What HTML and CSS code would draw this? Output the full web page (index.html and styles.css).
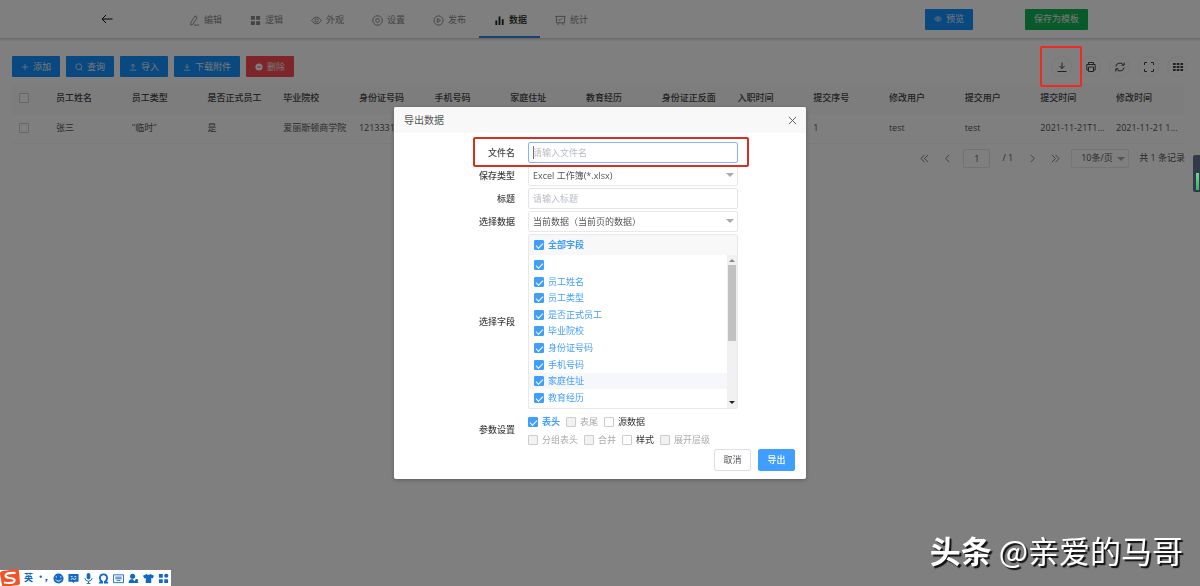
FILE: index.html
```html
<!DOCTYPE html>
<html lang="zh-CN">
<head>
    <meta charset="UTF-8">
    <meta name="viewport" content="width=device-width, initial-scale=1.0">
    <title>数据管理</title>
    <link rel="stylesheet" href="styles.css">
</head>
<body>
    <header class="topbar">
        <button class="back" aria-label="返回">
            <svg width="12" height="10" viewBox="0 0 12 10"><path d="M11.500 5H1M5 1 1 5l4 4"/></svg>
        </button>
        <nav class="tabs">
            <a href="#" class="tab"><svg class="icon" viewBox="0 0 12 12"><path d="M2 8.500 6.500 1l2.500 1.500L4.500 10 2 11zM5.500 11H11"/></svg>编辑</a>
            <a href="#" class="tab"><svg class="icon fill" viewBox="0 0 12 12"><path d="M1 1h4.300v4.300H1zM6.700 1H11v4.300H6.700zM1 6.700h4.300V11H1zM6.700 6.700H11V11H6.700z"/></svg>逻辑</a>
            <a href="#" class="tab"><svg class="icon" viewBox="0 0 12 12"><path d="M.5 6Q6-1.500 11.500 6 6 13.500.5 6z"/><circle cx="6" cy="6" r="1.800"/></svg>外观</a>
            <a href="#" class="tab"><svg class="icon" viewBox="0 0 12 12"><path d="M4 1h4l3 3v4l-3 3H4L1 8V4z"/><circle cx="6" cy="6" r="2"/></svg>设置</a>
            <a href="#" class="tab"><svg class="icon" viewBox="0 0 12 12"><circle cx="6" cy="6" r="5"/><path d="M4.700 3.800v4.400L8.200 6z"/></svg>发布</a>
            <a href="#" class="tab active"><svg class="icon fill" viewBox="0 0 12 12"><path d="M1.500 6h2v5h-2zM5 1.500h2V11H5zM8.500 4.500h2V11h-2z"/></svg>数据</a>
            <a href="#" class="tab"><svg class="icon" viewBox="0 0 12 12"><path d="M.5 1.500h11M1.500 1.500V8.500h9v-7M3.500 5l2 1 2.500-2.500M4 8.500 3 11M8 8.500 9 11"/></svg>统计</a>
        </nav>
        <div class="top-actions">
            <button class="btn"><svg class="glyph" viewBox="0 0 10 10"><path d="M.5 5Q5-.500 9.500 5 5 10.500.5 5z"/><circle cx="5" cy="5" r="1.500"/></svg>预览</button>
            <button class="btn green">保存为模板</button>
        </div>
    </header>

    <main class="page">
        <div class="toolbar">
            <button class="btn"><svg class="glyph" viewBox="0 0 10 10"><path d="M5 1v8M1 5h8"/></svg>添加</button>
            <button class="btn"><svg class="glyph" viewBox="0 0 10 10"><circle cx="4.700" cy="4.700" r="3.700"/><path d="m7.500 7.500 1.500 2"/></svg>查询</button>
            <button class="btn"><svg class="glyph" viewBox="0 0 10 10"><path d="M1 9h8M5 7V1.500M2.500 4 5 1.500 7.500 4"/></svg>导入</button>
            <button class="btn"><svg class="glyph" viewBox="0 0 10 10"><path d="M1 9h8M5 1v5.500M2.500 4 5 6.500 7.500 4"/></svg>下载附件</button>
            <button class="btn red"><svg class="glyph solid" viewBox="0 0 10 10"><path d="M5 .5a4.500 4.500 0 1 0 0 9 4.500 4.500 0 0 0 0-9zM2.800 4.300h4.400v1.400H2.800z"/></svg>删除</button>
            <div class="tools">
                <button class="tool" aria-label="导出"><svg viewBox="0 0 12 12"><path d="M1.500 10.500h9M6 1.500v6M3.500 5 6 7.500 8.500 5"/></svg></button>
                <button class="tool" aria-label="打印"><svg viewBox="0 0 12 12"><path d="M3.500 3V1.500h5V3M3.500 9H1.800V3.500h8.400V9H8.500M3.500 6h5v4.500h-5z"/></svg></button>
                <button class="tool" aria-label="刷新"><svg viewBox="0 0 12 12"><path d="M1.800 5.500Q2.500 2 6 2q2.500 0 3.500 2M10.200 1.500V4.200H7.500M10.200 6.500Q9.500 10 6 10 3.500 10 2.500 8M1.800 10.500V7.800h2.700"/></svg></button>
                <button class="tool" aria-label="全屏"><svg viewBox="0 0 12 12"><path d="M1.500 4V1.500H4M8 1.500h2.500V4M10.500 8v2.500H8M4 10.500H1.500V8"/></svg></button>
                <button class="tool" aria-label="列设置"><svg class="fill" viewBox="0 0 12 12"><path d="M1 2h2.700v2H1zM4.700 2h2.700v2H4.700zM8.400 2h2.700v2H8.400zM1 5h2.700v2H1zM4.700 5h2.700v2H4.700zM8.400 5h2.700v2H8.400zM1 8h2.700v2H1zM4.700 8h2.700v2H4.700zM8.400 8h2.700v2H8.400z"/></svg></button>
            </div>
        </div>

        <table class="grid">
            <thead>
                <tr>
                    <th class="pick"><input type="checkbox" class="check" aria-label="全选"></th>
                    <th>员工姓名</th><th>员工类型</th><th>是否正式员工</th><th>毕业院校</th><th>身份证号码</th>
                    <th>手机号码</th><th>家庭住址</th><th>教育经历</th><th>身份证正反面</th><th>入职时间</th>
                    <th>提交序号</th><th>修改用户</th><th>提交用户</th><th>提交时间</th><th>修改时间</th>
                </tr>
            </thead>
            <tbody>
                <tr>
                    <td class="pick"><input type="checkbox" class="check" aria-label="选择张三"></td>
                    <td>张三</td><td>"临时"</td><td>是</td><td>爱丽斯顿商学院</td><td>12133313</td>
                    <td></td><td></td><td></td><td></td><td></td>
                    <td>1</td><td>test</td><td>test</td><td>2021-11-21T1...</td><td>2021-11-21 1...</td>
                </tr>
            </tbody>
        </table>

        <div class="pager">
            <button class="arrow" aria-label="首页"><svg viewBox="0 0 10 10"><path d="M5 1 1 5l4 4M9 1 5 5l4 4"/></svg></button>
            <button class="arrow" aria-label="上一页"><svg viewBox="0 0 10 10"><path d="M7 1 3 5l4 4"/></svg></button>
            <input class="page-no" type="text" value="1" aria-label="页码">
            <span class="total-pages">/ 1</span>
            <button class="arrow" aria-label="下一页"><svg viewBox="0 0 10 10"><path d="m3 1 4 4-4 4"/></svg></button>
            <button class="arrow" aria-label="末页"><svg viewBox="0 0 10 10"><path d="m1 1 4 4-4 4M5 1l4 4-4 4"/></svg></button>
            <div class="select size">
                <select aria-label="每页条数"><option>10条/页</option></select>
            </div>
            <span>共 1 条记录</span>
        </div>
    </main>

    <div class="mask">
        <form class="dialog" role="dialog" aria-labelledby="dialogTitle">
            <div class="dialog-head">
                <h2 id="dialogTitle">导出数据</h2>
                <button type="button" class="close" aria-label="关闭"><svg viewBox="0 0 10 10"><path d="m1 1 8 8M9 1 1 9"/></svg></button>
            </div>
            <div class="dialog-body">
                <div class="row marked">
                    <label for="fileName">文件名</label>
                    <div class="control caret"><input class="text focus" id="fileName" type="text" placeholder="请输入文件名"></div>
                </div>
                <div class="row">
                    <label for="saveType">保存类型</label>
                    <div class="control select"><select id="saveType"><option>Excel 工作簿(*.xlsx)</option></select></div>
                </div>
                <div class="row">
                    <label for="sheetTitle">标题</label>
                    <div class="control"><input class="text" id="sheetTitle" type="text" placeholder="请输入标题"></div>
                </div>
                <div class="row">
                    <label for="range">选择数据</label>
                    <div class="control select"><select id="range"><option>当前数据（当前页的数据）</option></select></div>
                </div>
                <div class="row">
                    <span class="label">选择字段</span>
                    <div class="control fields">
                        <label class="option all"><input type="checkbox" class="check" checked>全部字段</label>
                        <div class="scroller">
                            <div class="list">
                                <label class="option"><input type="checkbox" class="check" aria-label="序号" checked></label>
                                <label class="option"><input type="checkbox" class="check" checked>员工姓名</label>
                                <label class="option"><input type="checkbox" class="check" checked>员工类型</label>
                                <label class="option"><input type="checkbox" class="check" checked>是否正式员工</label>
                                <label class="option"><input type="checkbox" class="check" checked>毕业院校</label>
                                <label class="option"><input type="checkbox" class="check" checked>身份证号码</label>
                                <label class="option"><input type="checkbox" class="check" checked>手机号码</label>
                                <label class="option hover"><input type="checkbox" class="check" checked>家庭住址</label>
                                <label class="option"><input type="checkbox" class="check" checked>教育经历</label>
                            </div>
                            <div class="bar">
                                <i class="up"></i>
                                <i class="thumb"></i>
                                <i class="down"></i>
                            </div>
                        </div>
                    </div>
                </div>
                <div class="row">
                    <span class="label">参数设置</span>
                    <div class="params">
                        <div class="param-line">
                            <label class="param on"><input type="checkbox" class="check" checked>表头</label>
                            <label class="param off"><input type="checkbox" class="check" disabled>表尾</label>
                            <label class="param"><input type="checkbox" class="check">源数据</label>
                        </div>
                        <div class="param-line">
                            <label class="param off"><input type="checkbox" class="check" disabled>分组表头</label>
                            <label class="param off"><input type="checkbox" class="check" disabled>合并</label>
                            <label class="param"><input type="checkbox" class="check">样式</label>
                            <label class="param off"><input type="checkbox" class="check" disabled>展开层级</label>
                        </div>
                    </div>
                </div>
            </div>
            <div class="dialog-foot">
                <button type="button" class="plain">取消</button>
                <button type="button" class="plain primary">导出</button>
            </div>
        </form>
    </div>

    <div class="mark"></div>
    <div class="side-widget"></div>

    <div class="watermark"><b>头条</b> @亲爱的马哥</div>

    <div class="ime">
        <svg class="sogou" viewBox="0 0 20 18"><path d="M3 2 17 0q2 0 2 2l1 12q0 2-2 2L4 18q-2 0-2-2L0 5q0-3 3-3z" fill="#f0532a"/><path d="M15.500 4Q6 3.500 5.500 6.500 5.500 8.500 10 9q5 .6 4.500 2.800Q13.500 15 4 13.500" fill="none" stroke="#fff" stroke-width="2.200"/></svg>
        <span>英</span>
        <svg viewBox="0 0 12 12"><circle cx="3" cy="4" r="1.300"/><path d="M8 6.500h2.500Q10.500 9.500 8 10.500q1-1.500 0-4z"/></svg>
        <svg viewBox="0 0 12 12"><circle cx="6" cy="6" r="5.500"/><path class="cut" d="M3 7q3 4 6 0M3.500 3.500v1.500M8.500 3.500v1.500"/></svg>
        <svg viewBox="0 0 12 12"><path d="M.5 1h11v8.500h-4L6 11 4.500 9.500h-4z"/><path class="cut" d="M3 4h2M7 4h2M3 7 5 6l2 1 2-1"/></svg>
        <svg viewBox="0 0 12 12"><rect x="4" y="0" width="4" height="7" rx="2"/><path class="line" d="M2 5.500Q2.500 9 6 9t4-3.500M6 9v2.500M4 11.500h4"/></svg>
        <svg viewBox="0 0 12 12"><path class="line bold" d="M1 10.500H4.500V9.500Q2 8 2 5.500 2.500 1.500 6 1.500T10 5.500Q10 8 7.500 9.500v1H11"/></svg>
        <svg viewBox="0 0 12 12"><path class="line" d="M.5 2h11v8.500H.5zM2.500 4.500h7M2.500 6.300h7M4 8.300h4"/></svg>
        <svg viewBox="0 0 12 12"><circle cx="5" cy="3.500" r="2.800"/><path d="M.5 11Q1 6.500 5 6.500L7 9l2-2.500L11.500 11z"/><circle cx="9.500" cy="8" r="1.500"/></svg>
        <svg viewBox="0 0 12 12"><path d="M4 1q2 2 4 0l4 2-1.500 3L9 5.500V11H3V5.500L1.500 6 0 3z"/></svg>
        <svg viewBox="0 0 12 12"><path d="M1 1h4.200v4.200H1zM1 6.800h4.200V11H1zM6.800 6.800H11V11H6.800z"/><circle cx="9" cy="3" r="2.300"/></svg>
    </div>
</body>
</html>
```
FILE: styles.css
```css
* {
    margin: 0;
    padding: 0;
    box-sizing: border-box;
}

:root {
    --blue: #409eff;
    --line: #dcdfe6;
    --text: #555;
    --mark: #d8301f;
}

body {
    min-height: 100vh;
    background: #fff;
    color: var(--text);
    font-family: "Open Sans", "Noto Sans CJK SC", sans-serif;
    font-size: 9px;
    line-height: 12px;
}

button,
input,
select {
    font: inherit;
    color: inherit;
}

button {
    display: inline-flex;
    align-items: center;
    justify-content: center;
    border: none;
    background: none;
    cursor: pointer;
}

svg {
    fill: none;
    stroke: currentColor;
}

svg.fill {
    fill: currentColor;
    stroke: none;
}

/* top bar */
.topbar {
    display: flex;
    align-items: center;
    height: 39px;
    padding-left: 101px;
    border-bottom: 1px solid #d2d2d2;
    box-shadow: 0 1px 2px #ddd;
}

.back {
    color: #000;
}

.tabs {
    display: flex;
    align-self: stretch;
    margin-left: 61px;
}

.tab {
    display: flex;
    align-items: center;
    gap: 4px;
    padding: 4px 13px 0 15px;
    border-bottom: 2px solid transparent;
    color: #888;
    text-decoration: none;
}

.tab.active {
    border-color: #2c86e0;
    color: #222;
    font-weight: 500;
}

.icon {
    width: 11px;
    height: 11px;
}

.top-actions {
    display: flex;
    gap: 52px;
    margin-left: auto;
    margin-right: 112px;
}

.btn {
    gap: 4px;
    height: 21px;
    padding: 0 9px;
    border-radius: 1px;
    background: #1292ff;
    color: #eee;
}

.btn.green {
    background: #12b454;
}

.btn.red {
    background: #fa4a50;
}

.glyph {
    width: 8px;
    height: 8px;
}

.glyph.solid {
    fill: #fff;
    fill-rule: evenodd;
    stroke: none;
}

/* page */
.page {
    padding: 17px 12px 0;
}

.toolbar {
    display: flex;
    align-items: center;
    gap: 6px;
}

.tools {
    display: flex;
    gap: 8px;
    margin-left: auto;
}

.tool {
    width: 21px;
    height: 21px;
    border: 1px solid #f2f2f2;
    border-radius: 50%;
    color: #444;
}

.tool svg {
    flex: none;
    width: 12px;
    height: 12px;
}

.grid {
    width: calc(100% - 4px);
    margin-top: 6px;
    border-collapse: collapse;
    table-layout: fixed;
}

.grid th,
.grid td {
    height: 30px;
    padding-left: 8px;
    border-bottom: 1px solid #f6f6f6;
    text-align: left;
    white-space: nowrap;
}

.grid th {
    background: #fafafa;
    font-weight: 500;
    color: #444;
}

.grid .pick {
    width: 36px;
    padding-left: 7px;
}

.pager {
    display: flex;
    align-items: center;
    justify-content: flex-end;
    margin-top: 5px;
    padding-right: 3px;
}

.arrow {
    width: 23px;
    color: #777;
}

.arrow svg {
    width: 9px;
    height: 9px;
}

.page-no {
    width: 27px;
    height: 19px;
    margin: 0 12px 0 4px;
    border: 1px solid #e4e4e4;
    border-radius: 2px;
    background: transparent;
    text-align: center;
}

.total-pages {
    margin-right: 8px;
}

.size {
    width: 58px;
    height: 19px;
    margin: 0 10px 0 4px;
}

/* shared controls */
.check {
    flex: none;
    display: block;
    width: 10px;
    height: 10px;
    border: 1px solid #ccc;
    border-radius: 1px;
    background: #fff;
    appearance: none;
}

.check:checked {
    border-color: var(--blue);
    background: var(--blue);
}

.check:checked::before {
    content: "";
    display: block;
    width: 6px;
    height: 3px;
    margin: 2px 1px;
    border: solid #fff;
    border-width: 0 0 1px 1px;
    transform: rotate(-45deg);
}

.check:disabled {
    background: #f2f2f2;
}

.select {
    position: relative;
}

.select select {
    width: 100%;
    height: 100%;
    padding-left: 4px;
    border: 1px solid #e8e8e8;
    border-radius: 2px;
    background: transparent;
    appearance: none;
}

.size select {
    padding-left: 9px;
}

.select::after {
    content: "";
    position: absolute;
    top: 8px;
    right: 4px;
    border: 4px solid transparent;
    border-top-color: #aaa;
    border-bottom: none;
}

/* dialog */
.mask {
    position: fixed;
    inset: 0;
    display: flex;
    align-items: center;
    justify-content: center;
    background: rgba(0, 0, 0, 0.5);
}

.dialog {
    width: 412px;
    border-radius: 2px;
    background: #fff;
    box-shadow: 0 1px 4px rgba(0, 0, 0, 0.3);
}

.dialog-head {
    display: flex;
    align-items: center;
    justify-content: space-between;
    height: 26px;
    padding: 0 9px 0 10px;
    border-radius: 2px 2px 0 0;
    background: #f8f8f8;
}

.dialog-head h2 {
    font-size: 10px;
    font-weight: 400;
}

.close svg {
    width: 9px;
    height: 9px;
}

.dialog-body {
    display: grid;
    gap: 2px;
    padding-top: 9px;
}

.row {
    position: relative;
    display: grid;
    grid-template-columns: 121px 1fr;
    column-gap: 13px;
    align-items: center;
    padding-right: 68px;
}

.row > label,
.row > .label {
    text-align: right;
    color: #444;
    font-weight: 500;
}

.row .control {
    height: 21px;
}

.row .control.fields {
    height: 175px;
}

.text {
    display: block;
    width: 100%;
    height: 100%;
    padding: 0 4px;
    border: 1px solid #e4e4e4;
    border-radius: 2px;
    outline: none;
}

.text::placeholder {
    color: #b8bcc4;
}

.text.focus {
    border-color: #7eb6f5;
}

.caret {
    position: relative;
}

.caret::before {
    content: "";
    position: absolute;
    top: 4px;
    left: 5px;
    width: 1px;
    height: 13px;
    background: #777;
}

.marked::after {
    content: "";
    position: absolute;
    inset: -5px 57px -4px 79px;
    z-index: 1;
    border: 2px solid var(--mark);
    border-radius: 2px;
    pointer-events: none;
}

.fields {
    display: flex;
    flex-direction: column;
    border: 1px solid #e8e8e8;
    border-radius: 2px;
}

.option {
    display: flex;
    align-items: center;
    gap: 4px;
    padding-left: 5px;
    color: var(--blue);
}

.option.all {
    height: 20px;
    background: #f8f8f8;
    font-weight: 700;
}

.option.hover {
    background: #f5f7fa;
}

.scroller {
    flex: 1;
    display: flex;
}

.list {
    flex: 1;
    display: grid;
    grid-auto-rows: 1fr;
    padding: 2px 0;
}

.bar {
    display: flex;
    flex-direction: column;
    align-items: center;
    width: 10px;
    background: #f1f1f1;
}

.up,
.down {
    border: 3px solid transparent;
}

.up {
    margin: 1px 0 3px;
    border-bottom-color: #888;
}

.down {
    margin: auto 0 1px;
    border-top-color: #222;
}

.thumb {
    width: 8px;
    height: 76px;
    background: #c1c1c1;
}

.params {
    padding-top: 2px;
}

.param-line {
    display: flex;
    align-items: center;
    gap: 6px;
    height: 18px;
}

.param {
    display: flex;
    align-items: center;
    gap: 4px;
    color: #333;
}

.param.on {
    color: var(--blue);
    font-weight: 700;
}

.param.off {
    color: #aaa;
}

.dialog-foot {
    display: flex;
    justify-content: flex-end;
    gap: 7px;
    padding: 0 11px 8px;
}

.plain {
    width: 37px;
    height: 22px;
    border: 1px solid var(--line);
    border-radius: 2px;
}

.plain.primary {
    border-color: var(--blue);
    background: var(--blue);
    color: #fff;
    font-weight: 500;
}

/* layers over the page */
.mark {
    position: absolute;
    top: 46px;
    right: 118px;
    width: 42px;
    height: 41px;
    border: 2px solid #ee2b20;
    border-radius: 2px;
}

.side-widget {
    position: fixed;
    top: 155px;
    right: 0;
    width: 7px;
    height: 37px;
    padding: 18px 1px 2px 3px;
    border-radius: 2px 0 0 2px;
    background: linear-gradient(#74d39a, #3fae62) content-box, #303a48;
}

.watermark {
    position: fixed;
    right: 17px;
    bottom: 14px;
    color: #fff;
    font-family: "Noto Sans CJK SC", sans-serif;
    font-size: 31px;
    line-height: 44px;
    text-shadow: 2px 2px 1px #111;
}

.ime {
    position: fixed;
    left: 0;
    bottom: 0;
    display: flex;
    align-items: center;
    gap: 4px;
    height: 16px;
    padding-right: 2px;
    background: #fff;
    color: #1169c4;
    font-weight: 700;
}

.ime span {
    width: 10px;
}

.ime svg {
    width: 11px;
    height: 11px;
    fill: currentColor;
    stroke: none;
}

.ime .sogou {
    width: 20px;
    height: 18px;
}

.ime .cut {
    fill: none;
    stroke: #fff;
}

.ime .line {
    fill: none;
    stroke: currentColor;
}

.ime .bold {
    stroke-width: 2;
}
```
